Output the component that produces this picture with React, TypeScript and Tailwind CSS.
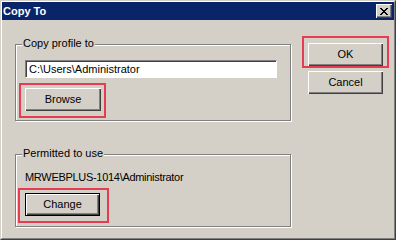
const btn =
  "flex items-center justify-center w-[75px] h-[23px] bg-[#d4d0c8] text-black text-[11px] leading-none shadow-[inset_1px_1px_0_#fff,inset_-1px_-1px_0_#404040,inset_-2px_-2px_0_#808080]";

const Group = ({ label, className, children }: { label: string; className: string; children: React.ReactNode }) => (
  <div className={`relative w-[276px] border border-[#808080] shadow-[inset_1px_1px_0_#fff,1px_1px_0_#fff] ${className}`}>
    {/* legend sits over the etched line */}
    <span className="absolute -top-[8px] left-[6px] bg-[#d4d0c8] px-[1px] text-[11px] leading-[13px] text-black">
      {label}
    </span>
    {children}
  </div>
);

const CloseIcon = () => (
  <svg width="8" height="7" viewBox="0 0 8 7" shapeRendering="crispEdges">
    <path d="M0 0h2v1h-2zM6 0h2v1h-2zM1 1h2v1h-2zM5 1h2v1h-2zM2 2h4v1h-4zM3 3h2v1h-2zM2 4h4v1h-4zM1 5h2v1h-2zM5 5h2v1h-2zM0 6h2v1h-2zM6 6h2v1h-2z" fill="#000" />
  </svg>
);

export default function App() {
  return (
    <div
      className="relative w-[396px] h-[240px] bg-[#d4d0c8] border border-t-[#d4d0c8] border-l-[#d4d0c8] border-r-[#404040] border-b-[#404040]"
      style={{ fontFamily: '"Liberation Sans", Arial, sans-serif' }}
    >
      <div className="h-full flex flex-col border border-t-white border-l-white border-r-[#808080] border-b-[#808080]">
        {/* title bar */}
        <div className="h-[18px] flex items-center justify-between bg-[#0a246a] pl-[1px] pr-[2px]">
          <span className="text-white text-[11px] font-bold leading-none">Copy To</span>
          <div className="w-[16px] h-[14px] flex items-center justify-center bg-[#d4d0c8] shadow-[inset_1px_1px_0_#fff,inset_-1px_-1px_0_#404040,inset_-2px_-2px_0_#808080]">
            <CloseIcon />
          </div>
        </div>

        {/* body */}
        <div className="flex pl-[13px]">
          <div className="flex flex-col">
            <Group label="Copy profile to" className="mt-[24px] h-[77px] pt-[15px] pl-[9px]">
              <div className="w-[252px] h-[18px] bg-white flex items-center pl-[3px] text-[11px] text-black border border-t-[#808080] border-l-[#808080] border-r-white border-b-white shadow-[inset_1px_1px_0_#404040]">
                C:\Users\Administrator
              </div>
              <div className={`${btn} mt-[10px] w-[76px]`}>Browse</div>
            </Group>

            <Group label="Permitted to use" className="mt-[33px] h-[73px] pt-[16px] pl-[9px]">
              <div className="text-[11px] leading-[13px] text-black tracking-[-0.3px]">MRWEBPLUS-1014\Administrator</div>
              <div className={`${btn} mt-[9px] border border-black shadow-[inset_1px_1px_0_#fff,inset_-1px_-1px_0_#404040,inset_-2px_-2px_0_#808080]`}>
                Change
              </div>
            </Group>
          </div>

          <div className="flex flex-col pt-[23px] pl-[17px]">
            <div className={btn}>OK</div>
            <div className={`${btn} mt-[5px]`}>Cancel</div>
          </div>
        </div>
      </div>

      {/* red highlight annotations */}
      <div className="absolute left-[18px] top-[82px] w-[87px] h-[35px] border-2 border-[#e63c52]" />
      <div className="absolute left-[301px] top-[35px] w-[87px] h-[32px] border-2 border-[#e63c52]" />
      <div className="absolute left-[17px] top-[187px] w-[91px] h-[35px] border-2 border-[#e63c52]" />
    </div>
  );
}
